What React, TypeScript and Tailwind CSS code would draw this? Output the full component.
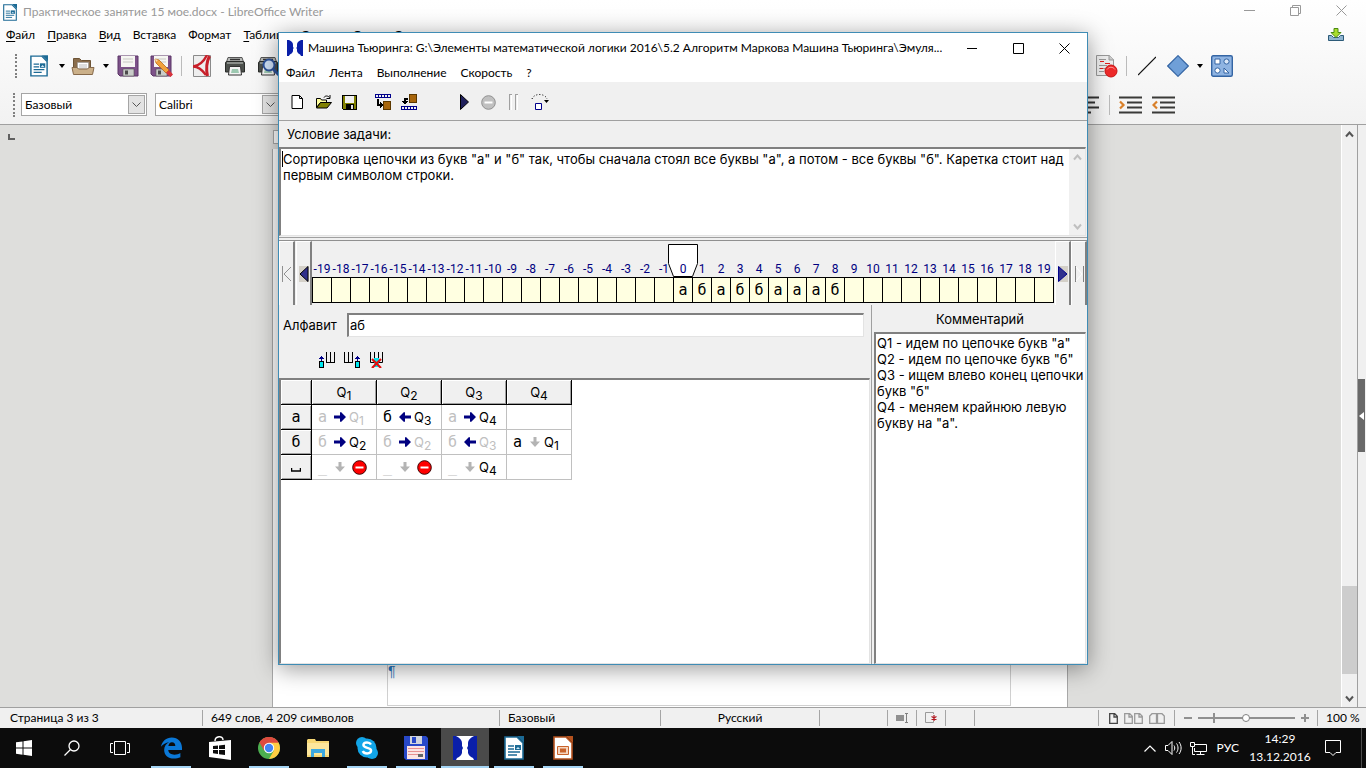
import type { ReactNode } from "react";

const UI_FONT = "font-[Lato,'Open_Sans',sans-serif]";
const APP_FONT = "font-[Inter,'Liberation_Sans',sans-serif]";

const WRITER_MENU = ["Файл", "Правка", "Вид", "Вставка", "Формат", "Таблица", "Сервис", "Окно", "Справка"];
const ACCESS_KEY = [0, 0, 0, 3, 2, 0, 1, 0, 0];

const TAPE_POSITIONS = Array.from({ length: 39 }, (_, i) => i - 19);
const TAPE = "абаббаааб";

const CONDITION =
  'Сортировка цепочки из букв "а" и "б" так, чтобы сначала стоял все буквы "а", а потом - все буквы "б". Каретка стоит над первым символом строки.';

const COMMENT = `Q1 - идем по цепочке букв "а"
Q2 - идем по цепочке букв "б"
Q3 - ищем влево конец цепочки
букв "б"
Q4 - меняем крайнюю левую
букву на "а".`;

type Dir = "left" | "right" | "stay";
interface Step {
  letter: string;
  same?: boolean;
  dir: Dir;
  state?: number;
  keep?: boolean;
}

const PROGRAM: { letter: string; steps: (Step | null)[] }[] = [
  {
    letter: "а",
    steps: [
      { letter: "а", same: true, dir: "right", state: 1, keep: true },
      { letter: "б", dir: "left", state: 3 },
      { letter: "а", same: true, dir: "right", state: 4 },
      null,
    ],
  },
  {
    letter: "б",
    steps: [
      { letter: "б", same: true, dir: "right", state: 2 },
      { letter: "б", same: true, dir: "right", state: 2, keep: true },
      { letter: "б", same: true, dir: "left", state: 3, keep: true },
      { letter: "а", dir: "stay", state: 1 },
    ],
  },
  {
    letter: "",
    steps: [
      { letter: "_", same: true, dir: "stay" },
      { letter: "_", same: true, dir: "stay" },
      { letter: "_", same: true, dir: "stay", state: 4 },
      null,
    ],
  },
];

/* ── Shared icons ───────────────────────────────────────── */

function WriterIcon({ className, color = "#1c6a95" }: { className: string; color?: string }) {
  return (
    <svg className={className} viewBox="0 0 20 24">
      <path d="M1 1h12l6 6v16H1z" fill="#fff" stroke={color} strokeWidth="1.6" />
      <path d="M13 0h7v7z" fill={color} />
      <path d="M4 10h6M4 13h6M4 16h12M4 19h9" stroke={color} strokeWidth="1.3" />
      <path d="M11 9h6v5h-6z" fill={color} />
      <path d="M12 13l2-2 2 2z" fill="#cfe8f8" />
    </svg>
  );
}

function FacesIcon({ className }: { className: string }) {
  return (
    <svg className={className} viewBox="0 0 24 24">
      <path d="M0 0h3c4 2 6 4 6 7v3l1 2-1 2v3c-1 3-3 4-5 5l-1 2H0z" fill="#0a1fa8" />
      <path d="M24 0h-3c-4 2-6 4-6 7v3l-1 2 1 2v3c1 3 3 4 5 5l1 2h3z" fill="#0a1fa8" />
    </svg>
  );
}

function Dropdown() {
  return (
    <svg className="h-1 w-[6px]" viewBox="0 0 6 4">
      <path d="M0 0h6L3 4z" fill="#000" />
    </svg>
  );
}

function IconButton({ label, className = "", children }: { label: string; className?: string; children: ReactNode }) {
  return (
    <button type="button" aria-label={label} className={`flex flex-none items-center justify-center ${className}`}>
      {children}
    </button>
  );
}

/* ── Writer window ──────────────────────────────────────── */

function Grip() {
  return <span className="h-6 flex-none border-l-2 border-dotted border-[#808080]" />;
}

function WriterTitle() {
  return (
    <header className="flex h-6 items-center pl-[3px] text-[#999]">
      <WriterIcon className="h-[17px] w-[14px]" />
      <h1 className="ml-[6px] text-xs">Практическое занятие 15 мое.docx - LibreOffice Writer</h1>
      <div className="ml-auto flex pb-1 pr-[2px]">
        <IconButton label="Свернуть" className="w-[46px]">
          <svg className="h-[11px] w-[11px]" viewBox="0 0 11 11"><path d="M0 5.500h11" stroke="currentColor" /></svg>
        </IconButton>
        <IconButton label="Восстановить" className="w-[46px]">
          <svg className="h-[11px] w-[11px]" viewBox="0 0 11 11" fill="none" stroke="currentColor">
            <path d="M.5 2.500h8v8h-8zM2.500 2.500v-2h8v8h-2" />
          </svg>
        </IconButton>
        <IconButton label="Закрыть" className="w-[46px]">
          <svg className="h-[11px] w-[11px]" viewBox="0 0 11 11"><path d="M.5.5l10 10M10.500.5l-10 10" stroke="currentColor" /></svg>
        </IconButton>
      </div>
    </header>
  );
}

function WriterMenu() {
  return (
    <nav className="flex h-[23px] items-center gap-3 pb-[2px] pl-[6px] text-xs text-black">
      {WRITER_MENU.map((item, i) => (
        <button type="button" key={item}>
          {item.slice(0, ACCESS_KEY[i])}
          <u className="underline-offset-2">{item[ACCESS_KEY[i]]}</u>
          {item.slice(ACCESS_KEY[i] + 1)}
        </button>
      ))}
      <IconButton label="Обновление" className="ml-auto mr-[22px]">
        <svg className="h-[14px] w-4" viewBox="0 0 16 14">
          <path d="M.5 7.500h3l2 2h5l2-2h3v5H.5z" fill="#8fb5d0" stroke="#2c5a78" />
          <path d="M6 .5h4v4h3L8 9.500 3 4.500h3z" fill="#a9dc2c" stroke="#4a8a10" />
        </svg>
      </IconButton>
    </nav>
  );
}

function Floppy() {
  return (
    <svg className="h-[22px] w-[22px]" viewBox="0 0 22 22">
      <path d="M1 1h20v20H3l-2-2z" fill="#7d5289" stroke="#5b3566" />
      <path d="M4 1h14v11H4z" fill="#f6f6f2" />
      <path d="M6 4h10M6 7h10" stroke="#c8c8c4" />
      <path d="M6 14h11v7H6z" fill="#c9ccc9" stroke="#555" strokeWidth=".6" />
      <path d="M8 15.500h3v4H8z" fill="#4b4b4b" />
    </svg>
  );
}

function Printer() {
  return (
    <svg className="h-[22px] w-[22px]" viewBox="0 0 22 22">
      <path d="M4 2.500h14l2 6H2z" fill="#b8bab8" stroke="#555" />
      <path d="M6 4.500h10" stroke="#333" strokeWidth="1.500" />
      <path d="M1.500 8c0-1 .5-1.500 1.500-1.500h16c1 0 1.500.5 1.500 1.500v9h-19z" fill="#4c504c" stroke="#2a2c2a" />
      <path d="M3 8h16" stroke="#c8ccc8" />
      <path d="M5.500 11.500h11l1 8.500h-13z" fill="#f4f4f4" stroke="#333" />
      <path d="M8 14h6l1 4H7z" fill="#9cc8b0" />
    </svg>
  );
}

function StandardToolbar() {
  return (
    <div className="flex h-[38px] items-center pl-[15px] pr-[133px]">
      <Grip />
      <IconButton label="Создать" className="ml-[13px]"><WriterIcon className="h-[22px] w-[18px]" /></IconButton>
      <IconButton label="Варианты создания" className="ml-[11px]"><Dropdown /></IconButton>
      <IconButton label="Открыть" className="ml-[6px]">
        <svg className="h-[22px] w-6" viewBox="0 0 24 22">
          <path d="M2.500 13V3.500h6l2 2h9V13z" fill="#8a6d4c" stroke="#6d5436" />
          <path d="M6.500 7.500h11V14h-11z" fill="#fff" stroke="#999" strokeWidth=".6" />
          <path d="M8 10h8M8 12h8" stroke="#bbb" />
          <path d="M1 12.500h5l1.500 1.500h9l1.500-1.500h5l-1.500 7h-19z" fill="#cbb089" stroke="#86694a" />
        </svg>
      </IconButton>
      <IconButton label="Варианты открытия" className="ml-2"><Dropdown /></IconButton>
      <IconButton label="Сохранить" className="ml-2"><Floppy /></IconButton>
      <IconButton label="Сохранить как" className="relative ml-[11px]">
        <Floppy />
        <svg className="absolute left-[4px] top-[3px] h-5 w-5" viewBox="0 0 20 20">
          <path d="M1 1l4 1 10 10-3 3L2 5z" fill="#f2a23c" stroke="#b96a18" strokeWidth=".8" />
          <path d="M1 1l3 1-2 2z" fill="#f7dfb5" />
          <path d="M15 12l4 4.500-2.500 2.500-4.500-4z" fill="#d8323c" />
        </svg>
      </IconButton>
      <span className="ml-[9px] h-5 border-l border-[#bbb]" />
      <IconButton label="Экспорт в PDF" className="ml-[11px]">
        <svg className="h-[22px] w-[18px]" viewBox="0 0 18 22">
          <path d="M.5.500h17v21H.5z" fill="#eee" stroke="#8a8a8a" />
          <path d="M14 0C10 8 6 11 0 11.500c5 0 9 3 13 8.500" fill="none" stroke="#c8202a" strokeWidth="2.400" />
          <path d="M16.500 1c-3 6-3.500 13-2 20" fill="none" stroke="#c8202a" strokeWidth="3" />
        </svg>
      </IconButton>
      <IconButton label="Печать" className="ml-[13px]"><Printer /></IconButton>
      <IconButton label="Просмотр печати" className="relative ml-[11px]">
        <Printer />
        <svg className="absolute left-[5px] top-[3px] h-[18px] w-[18px]" viewBox="0 0 18 18">
          <circle cx="7" cy="7" r="5.500" fill="#cfe0f6" stroke="#2d529a" strokeWidth="2" />
          <path d="M11 11l6 6" stroke="#2d529a" strokeWidth="3" />
        </svg>
      </IconButton>

      <IconButton label="Запись изменений" className="ml-auto">
        <svg className="h-6 w-6" viewBox="0 0 24 24">
          <path d="M2.500 1.500h13l4 4v16h-17z" fill="#eee" stroke="#999" />
          <path d="M15 1v5h5" fill="#ccc" stroke="#999" />
          <path d="M5 5.500h7M5 11.500h8M5 14.500h6M5 17.500h5" stroke="#999" />
          <path d="M6 7.500h4M11 9.500h5M6 14.500h3" stroke="#e02020" />
          <circle cx="17" cy="17" r="6" fill="#ee2a2a" stroke="#c81414" />
          <path d="M13 15.500c2-3 6-3 8 0" stroke="#ff9a9a" fill="none" />
        </svg>
      </IconButton>
      <span className="ml-2 h-5 border-l border-[#bbb]" />
      <IconButton label="Линия" className="ml-[11px]">
        <svg className="h-5 w-[18px]" viewBox="0 0 18 20"><path d="M0 19L18 1" stroke="#111" strokeWidth="1.200" /></svg>
      </IconButton>
      <IconButton label="Фигура" className="ml-[11px]">
        <svg className="h-[22px] w-[22px]" viewBox="0 0 22 22">
          <path d="M11 .7L21.300 11 11 21.300.7 11z" fill="#6f9fd8" stroke="#3465a4" strokeWidth="1.200" />
        </svg>
      </IconButton>
      <IconButton label="Другие фигуры" className="ml-2"><Dropdown /></IconButton>
      <IconButton label="Функции рисования" className="ml-2">
        <svg className="h-[22px] w-[22px]" viewBox="0 0 22 22" stroke="#3465a4">
          <rect x=".7" y=".7" width="20.600" height="20.600" rx="1.500" fill="#8fb4e2" strokeWidth="1.400" />
          <path d="M4 4h5v5H4zM13 13v5h5z" fill="#fff" />
          <circle cx="15.500" cy="6.500" r="2.600" fill="#d8e6f7" />
          <circle cx="6.500" cy="15.500" r="2.600" fill="#fff" />
        </svg>
      </IconButton>
    </div>
  );
}

function Combo({ label, value }: { label: string; value: string }) {
  return (
    <label className="relative flex h-[23px] w-[126px] flex-none border border-[#a5a5a5] bg-white">
      <select aria-label={label} className="w-full appearance-none pl-[3px] text-xs text-black">
        <option>{value}</option>
      </select>
      <span className="pointer-events-none absolute bottom-px right-px top-px flex w-[17px] items-center justify-center border border-[#a5a5a5] bg-[#e3e3e3]">
        <svg className="h-[5px] w-[9px]" viewBox="0 0 9 5"><path d="M.5.5l4 4 4-4" fill="none" stroke="#555" /></svg>
      </span>
    </label>
  );
}

function FormatToolbar() {
  return (
    <div className="flex h-[39px] items-center pl-[13px] pr-[191px]">
      <Grip />
      <div className="ml-[6px] flex gap-2">
        <Combo label="Стиль" value="Базовый" />
        <Combo label="Шрифт" value="Calibri" />
      </div>
      <IconButton label="Выравнивание" className="ml-auto">
        <svg className="h-5 w-[22px]" viewBox="0 0 22 20">
          <path d="M0 2.500h22M0 7.500h18M0 12.500h22M0 17.500h14" stroke="#333" strokeWidth="2" />
        </svg>
      </IconButton>
      <span className="ml-[10px] h-5 border-l border-[#bbb]" />
      <IconButton label="Увеличить отступ" className="ml-[9px]">
        <svg className="h-5 w-[23px]" viewBox="0 0 23 20">
          <path d="M0 2.500h23M8 7.500h15M8 12.500h15M0 17.500h23" stroke="#3a3a38" strokeWidth="2.200" />
          <path d="M1 6.500l3.500 3.500L1 13.500" fill="none" stroke="#d9802a" strokeWidth="2.200" />
        </svg>
      </IconButton>
      <IconButton label="Уменьшить отступ" className="ml-[10px]">
        <svg className="h-5 w-[23px]" viewBox="0 0 23 20">
          <path d="M0 2.500h23M8 7.500h15M8 12.500h15M0 17.500h23" stroke="#3a3a38" strokeWidth="2.200" />
          <path d="M5 6.500L1.500 10 5 13.500" fill="none" stroke="#d9802a" strokeWidth="2.200" />
        </svg>
      </IconButton>
    </div>
  );
}

function DocumentArea() {
  return (
    <div className="flex min-h-0 flex-1 border-t border-[#a0a0a0] bg-[#dededc]">
      <div className="flex min-w-0 flex-1 flex-col">
        <div className="flex h-6 flex-none items-center">
          <span className="ml-2 h-[6px] w-[7px] border-b-2 border-l-2 border-[#606060]" />
          <span className="ml-[258px] mr-[273px] h-[14px] flex-1 border border-[#a8a8a8] bg-white" />
        </div>
        <div className="ml-[272px] mr-[273px] flex flex-1 border-x border-[#a8a8a8] bg-white pl-[114px] pr-[56px]">
          <div className="mb-px flex flex-1 items-end border border-t-0 border-[#d0d0d0] pb-7 font-['Liberation_Sans',sans-serif] text-sm leading-3 text-[#2a78c0]">¶</div>
        </div>
      </div>
      <div className="flex w-4 flex-none flex-col items-center border-l border-white bg-[#f0f0f0]">
        <svg className="mt-[6px] h-[7px] w-[9px]" viewBox="0 0 9 7"><path d="M1 5.500l3.500-4 3.500 4" fill="none" stroke="#555" strokeWidth="2" /></svg>
        <span className="mt-auto h-[88px] w-full bg-[#cdcdcd]" />
        <svg className="mb-[5px] mt-[21px] h-[7px] w-[9px]" viewBox="0 0 9 7"><path d="M1 1.500l3.500 4 3.500-4" fill="none" stroke="#555" strokeWidth="2" /></svg>
      </div>
      <div className="flex w-[9px] flex-none flex-col border-l border-[#a0a0a0] bg-[#f0f0f0] pt-[254px]">
        <button type="button" aria-label="Боковая панель" className="flex h-[73px] w-[7px] items-center justify-center bg-[#696969]">
          <svg className="h-2 w-[5px]" viewBox="0 0 5 8"><path d="M5 0v8L0 4z" fill="#fff" /></svg>
        </button>
      </div>
    </div>
  );
}

function PageGlyph({ active = false }: { active?: boolean }) {
  return (
    <svg className="h-[11px] w-[9px]" viewBox="0 0 9 11">
      <path d="M.7.7h5l2.600 2.600v7H.7zM5 1v3h3" fill="none" stroke={active ? "#444" : "#999"} strokeWidth="1.300" />
    </svg>
  );
}

function StatusBar() {
  const cell = "flex h-4 items-center border-[#a5a5a5]";
  return (
    <footer className="flex h-[21px] flex-none items-center border-t border-[#a0a0a0] bg-[#f0f0f0] text-xs text-black">
      <div className={`${cell} w-[203px] border-r pl-[10px]`}>Страница 3 из 3</div>
      <div className={`${cell} w-[297px] border-r pl-2`}>649 слов, 4 209 символов</div>
      <div className={`${cell} w-[161px] border-r pl-2`}>Базовый</div>
      <div className={`${cell} w-[159px] justify-center border-r`}>Русский</div>
      <div className={`${cell} w-[68px] border-r`} />
      <div className={`${cell} w-[29px] justify-center border-r`}>
        <svg className="h-[10px] w-3" viewBox="0 0 12 10"><path d="M0 2h8v6H0z" fill="#909090" /><path d="M9 .5h3M10.500 0v10M9 9.500h3" stroke="#808080" /></svg>
      </div>
      <div className={`${cell} w-[29px] justify-center border-r`}>
        <svg className="h-3 w-3" viewBox="0 0 12 12">
          <path d="M8.500 2V.5h-8v10h8V9" fill="none" stroke="#999" />
          <path d="M9 3v6M6.500 4.500l5 3M11.500 4.500l-5 3" stroke="#b01820" strokeWidth="1.200" />
        </svg>
      </div>
      <div className={`${cell} w-[29px] border-r`} />
      <div className={`${cell} flex-1 border-r`} />
      <div className={`${cell} w-[76px] justify-center gap-[6px] border-r`}>
        <PageGlyph active />
        <span className="flex gap-px"><PageGlyph /><PageGlyph /></span>
        <svg className="h-[11px] w-4" viewBox="0 0 16 11"><path d="M.7 10.300V3L3 .7h4.500v9.600zM8.500 10.300V.7H13L15.300 3v7.300z" fill="none" stroke="#999" strokeWidth="1.300" /></svg>
      </div>
      <div className={`${cell} w-[143px] justify-center gap-[6px] border-r text-[#909090]`}>
        <svg className="h-2 w-2" viewBox="0 0 8 8"><path d="M0 4h8" stroke="currentColor" strokeWidth="2" /></svg>
        <input
          type="range"
          aria-label="Масштаб"
          defaultValue={50}
          className="h-[10px] w-[97px] appearance-none bg-[linear-gradient(#909090,#909090),linear-gradient(#909090,#909090)] bg-[length:100%_2px,2px_10px] bg-[position:center,15px_0] bg-no-repeat [&::-webkit-slider-thumb]:h-2 [&::-webkit-slider-thumb]:w-2 [&::-webkit-slider-thumb]:appearance-none [&::-webkit-slider-thumb]:rounded-full [&::-webkit-slider-thumb]:border [&::-webkit-slider-thumb]:border-[#808080] [&::-webkit-slider-thumb]:bg-white"
        />
        <svg className="h-2 w-2" viewBox="0 0 8 8"><path d="M0 4h8M4 0v8" stroke="currentColor" strokeWidth="2" /></svg>
      </div>
      <div className="w-12 pl-2">100 %</div>
    </footer>
  );
}

/* ── Turing machine window ──────────────────────────────── */

function MachineTitle() {
  return (
    <header className="flex h-[30px] flex-none items-center bg-white pl-2 text-black">
      <FacesIcon className="h-4 w-4 flex-none" />
      <h2 className="ml-[5px] min-w-0 truncate text-xs">
        Машина Тьюринга: G:\Элементы математической логики 2016\5.2 Алгоритм Маркова Машина Тьюринга\Эмуля...
      </h2>
      <div className="ml-auto flex flex-none">
        <IconButton label="Свернуть окно" className="w-[46px]">
          <svg className="h-[11px] w-[11px]" viewBox="0 0 11 11"><path d="M0 5.500h10" stroke="#000" /></svg>
        </IconButton>
        <IconButton label="Развернуть окно" className="w-[46px]">
          <svg className="h-[11px] w-[11px]" viewBox="0 0 11 11"><path d="M.5.5h10v10H.5z" fill="none" stroke="#000" /></svg>
        </IconButton>
        <IconButton label="Закрыть окно" className="w-[46px]">
          <svg className="h-[11px] w-[11px]" viewBox="0 0 11 11"><path d="M.5.5l10 10M10.500.5l-10 10" stroke="#000" /></svg>
        </IconButton>
      </div>
    </header>
  );
}

function MachineToolbar() {
  return (
    <div className="flex h-[39px] flex-none items-center border-b border-[#a0a0a0] pl-3 pt-[2px]">
      <IconButton label="Новый">
        <svg className="h-4 w-[13px]" viewBox="0 0 13 16"><path d="M1 1.500h7.500l3 3v10H1zM8.500 1.500v3h3" fill="#fff" stroke="#000" /></svg>
      </IconButton>
      <IconButton label="Открыть файл" className="ml-[11px]">
        <svg className="h-4 w-[17px]" viewBox="0 0 17 16">
          <path d="M1.500 13.500v-9h4l1 1.500h5v2.500h-6z" fill="#ffff9c" stroke="#000" />
          <path d="M1.500 14l4-5.500h11L12 14z" fill="#808000" stroke="#000" />
          <path d="M9 3.500c1-2 4-2 5.500 0M15 1v3.500h-3.500" fill="none" stroke="#000" />
        </svg>
      </IconButton>
      <IconButton label="Сохранить файл" className="ml-[10px]">
        <svg className="h-[15px] w-[15px]" viewBox="0 0 15 15" shapeRendering="crispEdges">
          <path d="M.5.5h14v14h-13l-1-1z" fill="#808000" stroke="#000" />
          <path d="M3 1h9v7H3z" fill="#f0f0f0" />
          <path d="M4 9h8v6H4z" fill="#000" />
          <path d="M9 10h2v4H9z" fill="#e0e0e0" />
        </svg>
      </IconButton>
      <IconButton label="Запомнить ленту" className="ml-[18px]">
        <svg className="h-4 w-[17px]" viewBox="0 0 17 16" shapeRendering="crispEdges">
          <path d="M0 .5h16M0 3.500h16M.5 1v3M3.500 1v3M6.500 1v3M9.500 1v3M12.500 1v3M15.500 1v3" stroke="#00008b" />
          <path d="M2.500 5v6h3" fill="none" stroke="#000" strokeWidth="2" />
          <path d="M5 8l3 3-3 3z" fill="#000" />
          <path d="M8.500 7.500h7v8h-7z" fill="#a8660c" stroke="#5c3800" />
        </svg>
      </IconButton>
      <IconButton label="Восстановить ленту" className="ml-[9px]">
        <svg className="h-4 w-[17px]" viewBox="0 0 17 16" shapeRendering="crispEdges">
          <path d="M0 12.500h16M0 15.500h16M.5 12v4M3.500 12v4M6.500 12v4M9.500 12v4M12.500 12v4M15.500 12v4" stroke="#00008b" />
          <path d="M7 4.500H3.500V8" fill="none" stroke="#000" strokeWidth="2" />
          <path d="M1 7h6l-3 4z" fill="#000" />
          <path d="M8.500.5h7v8h-7z" fill="#a8660c" stroke="#5c3800" />
        </svg>
      </IconButton>
      <IconButton label="Запустить" className="ml-[42px]">
        <svg className="h-4 w-[9px]" viewBox="0 0 9 16"><path d="M.5.5v15L8.500 8z" fill="#20205c" stroke="#000" /></svg>
      </IconButton>
      <IconButton label="Остановить" className="ml-3">
        <svg className="h-[15px] w-[15px]" viewBox="0 0 15 15"><circle cx="7.500" cy="7.500" r="6.800" fill="#c0c0c0" stroke="#909090" /><path d="M3.500 7.500h8" stroke="#fff" strokeWidth="2" /></svg>
      </IconButton>
      <IconButton label="Пауза" className="ml-[13px]">
        <svg className="h-4 w-[9px]" viewBox="0 0 9 16" shapeRendering="crispEdges"><path d="M.5 16V.5H3M6.500 16V.5H9" fill="none" stroke="#a0a0a0" /><path d="M2.500 1v15M8.500 1v15" stroke="#fff" /></svg>
      </IconButton>
      <IconButton label="Шаг" className="ml-[13px]">
        <svg className="h-4 w-[18px]" viewBox="0 0 18 16">
          <path d="M1 5c2-6 13-6 15 0" fill="none" stroke="#000" strokeDasharray="1 2" />
          <path d="M13 6h5l-2.500 3z" fill="#000" />
          <path d="M4.500 9.500h6v6h-6z" fill="#fff" stroke="#00008b" />
        </svg>
      </IconButton>
    </div>
  );
}

function Condition() {
  return (
    <section className="flex flex-none flex-col pr-px">
      <label htmlFor="condition" className="flex h-[26px] items-center pl-2">Условие задачи:</label>
      <div className="relative flex h-[89px] border-2 border-b border-r border-b-[#e3e3e3] border-l-[#808080] border-r-[#e3e3e3] border-t-[#808080] bg-white">
        <textarea
          id="condition"
          className="h-full min-w-0 flex-1 resize-none overflow-hidden px-[2px] pt-[2px] leading-4 outline-none"
          defaultValue={CONDITION}
        />
        <span className="absolute left-px top-[2px] h-4 w-px bg-black" />
        <div className="flex w-4 flex-none flex-col items-center justify-between bg-[#f0f0f0] py-[5px]">
          <svg className="h-[7px] w-[9px]" viewBox="0 0 9 7"><path d="M1 5.500l3.500-4 3.500 4" fill="none" stroke="#bfbfbf" strokeWidth="2" /></svg>
          <svg className="h-[7px] w-[9px]" viewBox="0 0 9 7"><path d="M1 1.500l3.500 4 3.500-4" fill="none" stroke="#bfbfbf" strokeWidth="2" /></svg>
        </div>
      </div>
    </section>
  );
}

function TapeButton({ label, children }: { label: string; children: ReactNode }) {
  return (
    <button
      type="button"
      aria-label={label}
      className="flex w-4 flex-none items-center justify-center border border-r-2 border-b-0 border-l-white border-r-[#808080] border-t-white"
    >
      {children}
    </button>
  );
}

function Tape() {
  return (
    <section className="flex h-[65px] flex-none border-t border-[#909090]">
      <div className="flex w-[33px] flex-none gap-px">
        <TapeButton label="В начало ленты">
          <svg className="h-4 w-[10px]" viewBox="0 0 10 16"><path d="M.5 0v16M9 1L2 8l7 7" fill="none" stroke="#909090" /></svg>
        </TapeButton>
        <TapeButton label="Влево">
          <svg className="h-4 w-[10px]" viewBox="0 0 10 16"><path d="M0 0h10v16H0z" fill="#d4d0c8" /><path d="M9 .5v15L1 8z" fill="#30308c" stroke="#000" /></svg>
        </TapeButton>
      </div>
      <div className="relative flex min-w-0 flex-1 flex-col justify-end pb-[2px]">
        <svg className="absolute left-[356px] top-[3px] h-[34px] w-[31px]" viewBox="0 0 31 34">
          <path d="M.5.5h29v19l-5 13h-19l-5-13z" fill="#fff" stroke="#000" />
        </svg>
        <table className="relative table-fixed border-collapse self-start">
          <thead>
            <tr className="h-[17px] text-center font-[Roboto,sans-serif] text-xs leading-[15px] text-[#000080]">
              {TAPE_POSITIONS.map((n) => (
                <th key={n} className="w-[19px] min-w-[19px] max-w-[19px] overflow-visible whitespace-nowrap pt-[2px] font-normal">
                  <span className="flex justify-center">{n}</span>
                </th>
              ))}
            </tr>
          </thead>
          <tbody>
            <tr className="h-[25px] font-['DejaVu_Sans_Mono',monospace] text-[15px] leading-5">
              {TAPE_POSITIONS.map((n) => (
                <td key={n} className="border border-black bg-[#ffffe1] text-center">{TAPE[n]}</td>
              ))}
            </tr>
          </tbody>
        </table>
      </div>
      <div className="flex w-8 flex-none">
        <TapeButton label="Вправо">
          <svg className="h-4 w-[10px]" viewBox="0 0 10 16"><path d="M0 0h10v16H0z" fill="#d4d0c8" /><path d="M.5.5v15L9 8z" fill="#30308c" stroke="#00008b" /></svg>
        </TapeButton>
        <TapeButton label="В конец ленты">
          <svg className="h-4 w-[10px]" viewBox="0 0 10 16"><path d="M1.500 0v16M9.500 0v16" stroke="#808080" /><path d="M2 1l6 7-6 7" fill="none" stroke="#fff" /></svg>
        </TapeButton>
      </div>
    </section>
  );
}

function Arrow({ dir }: { dir: Dir }) {
  const turn = { right: "", left: "rotate(180 6 6)", stay: "rotate(90 6 6)" }[dir];
  return (
    <svg className="h-3 w-3" viewBox="0 0 12 12">
      <path
        transform={turn}
        d={dir === "stay" ? "M1 4.500h4.500V1L11 6l-5.500 5V7.500H1z" : "M0 4.500h6v-3l1-.5 5 5-5 5-1-.5v-3H0z"}
        fill={dir === "stay" ? "#b4b4b4" : "#000080"}
      />
    </svg>
  );
}

function StateName({ n }: { n: number }) {
  return (
    <span className="leading-4">
      Q<sub className="bottom-[-3px] text-xs">{n}</sub>
    </span>
  );
}

function StepCell({ step }: { step: Step | null }) {
  if (!step) return null;
  return (
    <div className="flex items-center pl-[6px]">
      <span className={`w-4 flex-none font-['DejaVu_Sans_Mono',monospace] text-[15px] leading-4 ${step.same ? "text-[#c0c0c0]" : "text-black"}`}>
        {step.letter}
      </span>
      <Arrow dir={step.dir} />
      {step.state ? (
        <span className={`ml-[3px] ${step.keep ? "text-[#c0c0c0]" : "text-black"}`}><StateName n={step.state} /></span>
      ) : (
        <svg className="ml-[6px] h-[15px] w-[15px]" viewBox="0 0 15 15">
          <circle cx="7.500" cy="7.500" r="6.800" fill="#f00" stroke="#400000" />
          <path d="M3.500 7.500h8" stroke="#fff" strokeWidth="2" />
        </svg>
      )}
    </div>
  );
}

function Program() {
  const head = "border-b border-r border-black bg-[#f0f0f0] p-0 font-normal shadow-[inset_1px_1px_#fff,inset_-1px_-1px_#a0a0a0]";
  return (
    <table className="table-fixed border-separate border-spacing-0">
      <thead>
        <tr className="h-[25px]">
          <th className={`${head} w-[31px]`} />
          {[1, 2, 3, 4].map((n) => (
            <th key={n} className={`${head} w-[65px]`}><StateName n={n} /></th>
          ))}
        </tr>
      </thead>
      <tbody>
        {PROGRAM.map((row, i) => (
          <tr key={i} className="h-[25px]">
            <th className={`${head} font-['DejaVu_Sans_Mono',monospace] text-[15px] leading-4`}>
              {row.letter || (
                <svg className="mx-auto mt-[6px] h-1 w-[10px]" viewBox="0 0 10 4"><path d="M.5 0v3h9V0" fill="none" stroke="#000" strokeWidth="1.500" /></svg>
              )}
            </th>
            {row.steps.map((step, j) => (
              <td key={j} className="border-b border-r border-[#c0c0c0] p-0"><StepCell step={step} /></td>
            ))}
          </tr>
        ))}
      </tbody>
    </table>
  );
}

function ColumnIcon({ kind }: { kind: "before" | "after" | "delete" }) {
  return (
    <svg className="h-4 w-4" viewBox="0 0 16 16" shapeRendering={kind === "delete" ? "auto" : "crispEdges"}>
      {kind === "delete" ? (
        <>
          <path d="M1.500 0v10.500h12V0M5.500 0v10M9.500 0v10" fill="none" stroke="#000" />
          <path d="M5 6h5v9H5z" fill="#00e8f0" />
          <path d="M3 7l9 9M12 7l-9 9" stroke="#e01010" strokeWidth="2.200" />
        </>
      ) : (
        <>
          <path
            d="M.5 0v10.500h8V0M4.500 0v10"
            transform={kind === "before" ? "translate(7 0)" : ""}
            fill="none"
            stroke="#000"
          />
          <g transform={kind === "before" ? "" : "translate(11 0)"}>
            <path d="M.5 9.500h4v6h-4z" fill="#00e8f0" stroke="#000" />
            <path d="M2 4h1v5H2zM1 5h3v1H1zM0 6h5v1H0z" fill="#00008b" />
          </g>
        </>
      )}
    </svg>
  );
}

function ProgramPane() {
  return (
    <section className="flex min-w-0 flex-1 flex-col">
      <div className="flex h-[39px] flex-none items-center pl-1 pr-[6px]">
        <label htmlFor="alphabet">Алфавит</label>
        <input
          id="alphabet"
          defaultValue="аб"
          className="ml-[10px] h-6 min-w-0 flex-1 border-2 border-b border-r border-b-[#e3e3e3] border-l-[#808080] border-r-[#e3e3e3] border-t-[#808080] bg-white px-px outline-none"
        />
      </div>
      <div className="flex h-[34px] flex-none items-center gap-[9px] pb-[6px] pl-10 pt-1">
        <IconButton label="Вставить столбец слева"><ColumnIcon kind="before" /></IconButton>
        <IconButton label="Вставить столбец справа"><ColumnIcon kind="after" /></IconButton>
        <IconButton label="Удалить столбец"><ColumnIcon kind="delete" /></IconButton>
      </div>
      <div className="min-h-0 flex-1 border-2 border-b border-r border-b-[#e3e3e3] border-l-[#808080] border-r-[#e3e3e3] border-t-[#808080] bg-white">
        <Program />
      </div>
    </section>
  );
}

function CommentPane() {
  return (
    <section className="flex w-[212px] flex-none flex-col">
      <label htmlFor="comment" className="flex h-[27px] flex-none items-center justify-center">Комментарий</label>
      <textarea
        id="comment"
        defaultValue={COMMENT}
        className="min-h-0 flex-1 resize-none overflow-hidden whitespace-pre border-2 border-b border-r border-b-[#e3e3e3] border-l-[#808080] border-r-[#e3e3e3] border-t-[#808080] bg-white px-px pt-px leading-4 outline-none"
      />
    </section>
  );
}

function MachineWindow() {
  return (
    <div className="absolute bottom-[103px] left-[278px] right-[278px] top-8 flex flex-col border border-[#3f8cb5] bg-[#f0f0f0] shadow-[0_4px_22px_rgba(0,0,0,0.4)]">
      <MachineTitle />
      <nav className="flex h-[19px] flex-none items-center gap-[14px] bg-white pl-[7px] text-xs text-black">
        {["Файл", "Лента", "Выполнение", "Скорость", "?"].map((item) => (
          <button type="button" key={item}>{item}</button>
        ))}
      </nav>
      <div className={`flex min-h-0 flex-1 flex-col text-[13px] leading-4 text-black ${APP_FONT}`}>
        <MachineToolbar />
        <Condition />
        <div className="mb-[2px] mt-px h-px flex-none bg-[#a0a0a0]" />
        <Tape />
        <div className="flex min-h-0 flex-1 pr-px">
          <ProgramPane />
          <div className="ml-px mr-[2px] w-px flex-none bg-[#a0a0a0]" />
          <CommentPane />
        </div>
      </div>
    </div>
  );
}

/* ── Taskbar ────────────────────────────────────────────── */

function Task({ label, running = false, active = false, children }: { label: string; running?: boolean; active?: boolean; children: ReactNode }) {
  return (
    <button
      type="button"
      aria-label={label}
      className={`relative flex h-10 w-12 items-center justify-center ${active ? "bg-[#4a4a4a]" : ""}`}
    >
      {children}
      {running && <span className={`absolute bottom-0 h-[2px] bg-[#a5d5f5] ${active ? "inset-x-0" : "inset-x-1"}`} />}
    </button>
  );
}

function Taskbar() {
  return (
    <div className="flex h-10 flex-none items-center bg-[#0c0c0c] text-white">
      <div className="flex">
        <Task label="Пуск">
          <svg className="h-4 w-4" viewBox="0 0 16 16"><path d="M0 2.300L6.500 1.400v6.200H0zM7.500 1.200L16 0v7.600H7.500zM0 8.500h6.500v6.200L0 13.800zM7.500 8.500H16V16l-8.500-1.200z" fill="#fff" /></svg>
        </Task>
        <Task label="Поиск">
          <svg className="h-4 w-4" viewBox="0 0 16 16" fill="none" stroke="#fff" strokeWidth="1.300"><circle cx="10" cy="6" r="5" /><path d="M6.500 9.500L.5 15.500" /></svg>
        </Task>
        <Task label="Представление задач">
          <svg className="h-[14px] w-5" viewBox="0 0 20 14" fill="none" stroke="#fff"><path d="M4.500.5h11v13h-11zM3 2.500H.5v9H3M17 2.500h2.500v9H17" /></svg>
        </Task>
      </div>
      <div className="ml-[3px] flex gap-px">
        <Task label="Edge" running>
          <svg className="h-[22px] w-[21px]" viewBox="0 0 22 22">
            <path d="M0 9.800C1 4 5.500 0 11.300 0 17.800 0 22 4.600 22 10.800v2.400H7.600c.3 3.500 3.200 4.800 6.400 4.800 2.400 0 4.500-.7 6.300-1.700v4.300C18.300 21.600 16 22 13.500 22 7.300 22 3.300 18.300 3.300 13c0-3.600 2-6.500 5.300-8C5 5.300 2.100 7 0 9.800zm7.700-.9H15c0-2.500-1.300-4-3.500-4S8.200 6.300 7.700 8.900z" fill="#0b78d7" />
          </svg>
        </Task>
        <Task label="Магазин">
          <svg className="h-6 w-[22px]" viewBox="0 0 22 24">
            <path d="M0 6l22-2v20L0 21z" fill="#fff" />
            <path d="M6 5c0-5 8-6 8-1" fill="none" stroke="#fff" strokeWidth="1.400" />
            <path d="M4 10l5-.5V13H4zM10 9.400l6-.6V13h-6zM4 14h5v4l-5-.7zM10 14h6v5l-6-.8z" fill="#0c0c0c" />
          </svg>
        </Task>
        <Task label="Chrome" running>
          <svg className="h-[22px] w-[22px]" viewBox="0 0 22 22">
            <circle cx="11" cy="11" r="11" fill="#4caf50" />
            <path d="M11 11L1.500 5.500A11 11 0 0 1 20.500 5.500z" fill="#dd4b3e" />
            <path d="M11 22A11 11 0 0 0 20.500 5.500H11L15.800 13.700z" fill="#ffcd42" />
            <path d="M11 5.500h9.500a11 11 0 0 0-19-.1L6.200 13.700z" fill="#dd4b3e" />
            <circle cx="11" cy="11" r="5.200" fill="#fff" />
            <circle cx="11" cy="11" r="4.200" fill="#4285f4" />
          </svg>
        </Task>
        <Task label="Проводник">
          <svg className="h-[18px] w-[22px]" viewBox="0 0 22 18">
            <path d="M0 1l1-1h7l1 2h13v16H0z" fill="#f7d774" />
            <path d="M0 4h22v12H0z" fill="#fce69c" />
            <path d="M4 10h14v8h-3v-4H7v4H4z" fill="#3da9e0" />
          </svg>
        </Task>
        <Task label="Skype" running>
          <svg className="h-[22px] w-[22px]" viewBox="0 0 22 22">
            <circle cx="11" cy="11" r="9.500" fill="#12a5e8" />
            <circle cx="6" cy="6" r="6" fill="#12a5e8" />
            <circle cx="16" cy="16" r="6" fill="#12a5e8" />
            <path d="M15 7.500c-1-1.700-2.500-2-4-2-2 0-3.600.9-3.600 2.600 0 3.600 7.700 2 7.700 5.500 0 1.800-1.800 2.900-4 2.900-2 0-3.600-.8-4.300-2.500" fill="none" stroke="#fff" strokeWidth="2.400" />
          </svg>
        </Task>
        <Task label="Total Commander" running>
          <svg className="h-6 w-6" viewBox="0 0 24 24">
            <path d="M0 0h22l2 2v22H2l-2-2z" fill="#2848c8" />
            <path d="M6 0h12v8H6z" fill="#d0d4dc" />
            <path d="M8 1h4v6H8z" fill="#2848c8" />
            <path d="M3 10h18v13H3z" fill="#fbe4e4" />
            <path d="M4 12.500h16M4 15.500h16M4 18.500h10" stroke="#e89090" />
            <path d="M14 18h5v3h-5z" fill="#666" />
          </svg>
        </Task>
        <Task label="Машина Тьюринга" running active>
          <span className="bg-white"><FacesIcon className="h-6 w-6" /></span>
        </Task>
        <Task label="LibreOffice Writer" running><WriterIcon className="h-6 w-5" /></Task>
        <Task label="LibreOffice Impress" running>
          <svg className="h-6 w-5" viewBox="0 0 20 24">
            <path d="M1 1h12l6 6v16H1z" fill="#fff" stroke="#b5521e" strokeWidth="1.600" />
            <path d="M13 0h7v7z" fill="#b5521e" />
            <path d="M4.500 10.500h11v8h-11z" fill="#f6d5bf" stroke="#c9622a" />
            <path d="M7 12.500h6v4H7z" fill="#c9622a" />
          </svg>
        </Task>
      </div>
      <div className="ml-auto flex h-full items-center text-xs">
        <svg className="h-[7px] w-3" viewBox="0 0 12 7"><path d="M.5 6.500L6 1l5.500 5.500" fill="none" stroke="#fff" strokeWidth="1.200" /></svg>
        <svg className="ml-[9px] h-[14px] w-[18px]" viewBox="0 0 18 14" fill="none" stroke="#fff">
          <path d="M.5 4.500h2.500l4-4v13l-4-4H.5zM9 4.500c1 1.500 1 3.500 0 5M11.500 2.500c2 2.500 2 6.500 0 9M14 1c2.800 3.500 2.800 8.500 0 12" />
        </svg>
        <svg className="ml-[7px] h-[13px] w-[17px]" viewBox="0 0 17 13" fill="none" stroke="#fff">
          <path d="M5 2.500h11.500v7H4.500V6M.5.500h4v4h-4zM2.500 5v7.500H5M10.500 10v2.500M6.500 12.500h8" />
        </svg>
        <span className="ml-[10px]">РУС</span>
        <div className="ml-[10px] w-[62px] text-center leading-[18px]">
          <div>14:29</div>
          <div>13.12.2016</div>
        </div>
        <svg className="ml-[14px] h-4 w-4" viewBox="0 0 16 16"><path d="M.5.500h15v12H11L8 15.500l-3-3H.5z" fill="none" stroke="#fff" /></svg>
        <span className="ml-5 mr-1 h-full border-l border-[#4c4c4c]" />
      </div>
    </div>
  );
}

export default function App() {
  return (
    <div className={`relative flex h-screen flex-col overflow-hidden bg-[#0c0c0c] ${UI_FONT}`}>
      <main className="flex min-h-0 flex-1 flex-col bg-white">
        <div className="flex-none bg-linear-to-b from-white to-[#f2f2f2]">
          <WriterTitle />
          <WriterMenu />
          <StandardToolbar />
          <FormatToolbar />
        </div>
        <DocumentArea />
        <StatusBar />
      </main>
      <MachineWindow />
      <Taskbar />
    </div>
  );
}
